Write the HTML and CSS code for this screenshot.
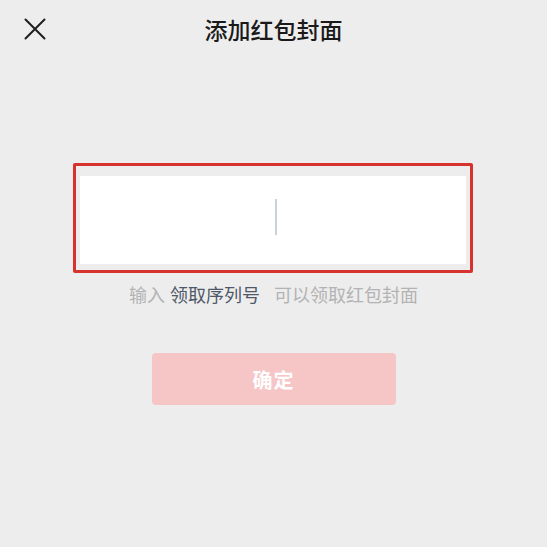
FILE: index.html
```html
<!DOCTYPE html>
<html lang="zh-CN">
<head>
<meta charset="utf-8">
<title>添加红包封面</title>
<link rel="stylesheet" href="styles.css">
</head>
<body>
<div class="page">
  <header class="header">
    <div class="close">
      <svg width="22" height="22" viewBox="0 0 22 22" aria-hidden="true">
        <path d="M1.5 1.5 L20.5 20.5 M20.5 1.5 L1.5 20.5" stroke="#1e1e1e" stroke-width="2" fill="none" stroke-linecap="round"/>
      </svg>
    </div>
    <h1 class="title">添加红包封面</h1>
    <div class="spacer"></div>
  </header>

  <main class="main">
    <div class="frame">
      <div class="input">
        <span class="cursor"></span>
      </div>
    </div>
    <p class="hint"><span class="muted">输入</span><span class="strong">领取序列号</span><span class="muted tail">可以领取红包封面</span></p>
    <button class="confirm" type="button">确定</button>
  </main>
</div>
</body>
</html>
```

FILE: styles.css
```css
* { box-sizing: border-box; }
html, body {
  margin: 0;
  padding: 0;
  background: #ededed;
}
body {
  font-family: "Noto Sans CJK SC", "Noto Sans", sans-serif;
  width: 547px;
  height: 547px;
  overflow: hidden;
}
.page {
  display: flex;
  flex-direction: column;
}
.header {
  height: 57px;
  display: grid;
  grid-template-columns: 1fr auto 1fr;
  align-items: center;
}
.close {
  padding-left: 24px;
  padding-top: 1px;
  display: flex;
  align-items: center;
}
.close svg { display: block; }
.title {
  margin: 0;
  font-size: 23px;
  font-weight: 500;
  color: #1a1a1a;
  line-height: 30px;
}
.main {
  display: flex;
  flex-direction: column;
  align-items: center;
  padding-top: 106px;
}
.frame {
  width: 400px;
  margin-left: -1px;
  border: 3px solid #d8322e;
  border-radius: 2px;
  padding: 10px 4px 6px 4px;
}
.input {
  height: 88px;
  background: #ffffff;
  display: flex;
  align-items: center;
  justify-content: center;
  padding-left: 6px;
  padding-bottom: 6px;
}
.cursor {
  width: 2px;
  height: 36px;
  background: #c9d2da;
}
.hint {
  margin: 9px 0 0 0;
  font-size: 18px;
  line-height: 24px;
  display: flex;
}
.muted { color: #b3b3b3; }
.strong { color: #4f5868; margin-left: 5px; }
.tail { margin-left: 14px; }
.confirm {
  margin-top: 47px;
  width: 244px;
  height: 52px;
  border: none;
  border-radius: 4px;
  background: #f6c6c7;
  color: #ffffff;
  font-family: "Noto Sans CJK SC", "Noto Sans", sans-serif;
  font-size: 20px;
  font-weight: 700;
  letter-spacing: 1px;
  padding: 0;
}
```
